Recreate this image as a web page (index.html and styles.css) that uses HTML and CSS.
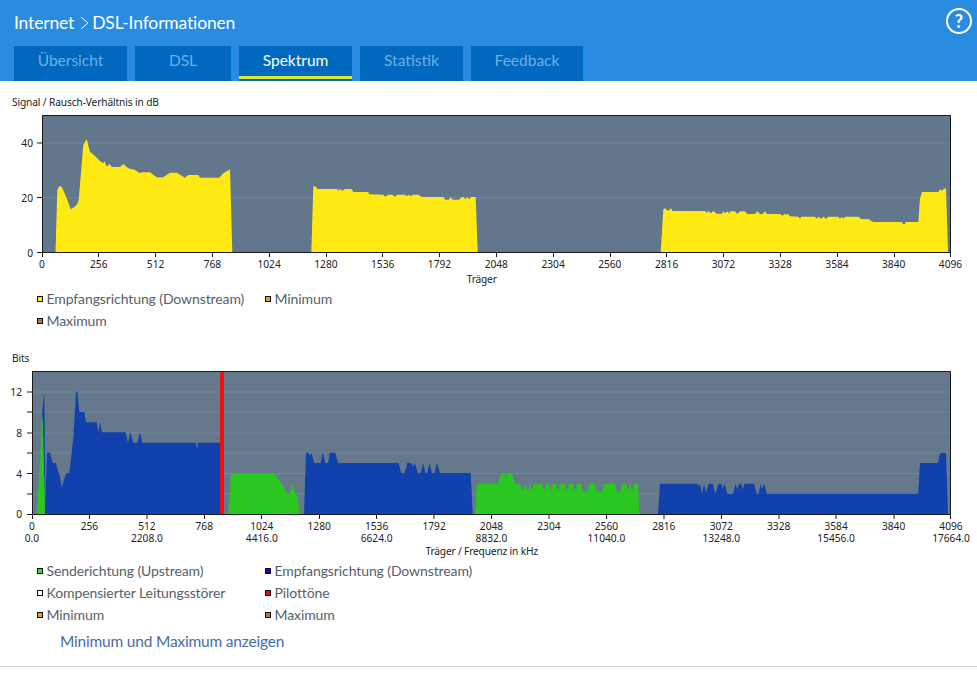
FILE: index.html
```html
<!DOCTYPE html>
<html lang="de">
<head>
<meta charset="utf-8">
<title>DSL-Informationen</title>
<link rel="stylesheet" href="styles.css">
</head>
<body>
<header class="top">
  <div class="title-row">
    <h1 class="crumb">
      <span>Internet</span>
      <svg class="chev" width="10" height="14" viewBox="0 0 10 14"><polyline points="3,1 10,7 3,13"/></svg>
      <span>DSL-Informationen</span>
    </h1>
    <span class="help">?</span>
  </div>
  <nav class="tabs">
    <a class="tab t1">Übersicht</a>
    <a class="tab t2">DSL</a>
    <a class="tab t3 active">Spektrum</a>
    <a class="tab t4">Statistik</a>
    <a class="tab t5">Feedback</a>
  </nav>
</header>
<main>
  <section class="chart first">
    <p class="chart-title">Signal / Rausch-Verhältnis in dB</p>
    <svg class="plot p1" width="977" height="178" viewBox="0 110 977 178">
      <rect class="bg" x="42" y="115" width="909" height="137.5"/>
      <path class="grid" d="M42 143H950M42 197.5H950"/>
      <polygon class="yellow" points="55.5,252.5 57.3,190 59.3,186 62,187.3 66.7,198.3 70.7,209.3 74,207.3 77.3,204 78.7,200 83.3,145 86.7,139 90,151.7 95,156 100,161 103.3,163.3 104.7,161.3 106.7,166.7 109.3,164 112,167 120,167 123.3,164 128.3,168.3 135,170 140,173.3 141.7,172.3 150,172.3 156.7,177.3 163.3,177.3 170,172.7 176.7,172.7 185,177.7 188.3,175 198.3,175 200,177.7 219.3,177.7 223.3,173.3 230,169.3 232.3,252.5"/>
      <polygon class="yellow" points="311.3,252.5 313.3,186 316.7,187.3 317.3,189 337.3,189 338.7,190.7 340,189 342.7,190.7 345,189 351.7,189 353.3,192 368.3,192 369,194.3 383.3,194.7 385.3,196.7 388,194.7 392.7,194.7 394.7,196.7 397.3,194.7 405.3,194.7 406.7,196.3 408.7,194.7 410.7,196.3 412.7,194.7 418.3,194.7 420,196 422,197 443.3,197 445.3,199.7 448.7,199.7 450.7,197.3 452.7,199.7 459.3,199.7 461.3,197.3 464,197.3 465.3,199.3 467.3,197.3 469.3,199.3 471.3,197 475.7,197 477.7,252.5"/>
      <polygon class="yellow" points="660.7,252.5 663.3,209.3 665,208.3 668.3,211 670.7,208.3 672.7,211 705,211 706.7,212.7 708.3,211 710.7,213.3 713.3,211 716.7,213.7 722,213.7 723.3,211.3 725.3,213.3 727.3,211.3 729.3,213.7 730,211.3 735,211.3 737.3,214 740,211.3 745,211.3 747.3,214 755,214 757.3,211.3 760,214 762.7,214 764.7,211.3 767.3,214 780,214 782.7,215.7 784,214.3 788.3,214.3 790,216.3 798.3,216.7 800,218.7 801.3,216.7 815,216.7 816.7,218.7 818.3,216.7 821,218.7 823.3,216.7 826,218.7 828.3,216.7 838.3,216.7 840,218.7 842,216.7 843.3,218.7 845.3,216.7 859,216.7 860.7,219 868.3,219.3 869.3,219 870.7,220.7 873.3,222 901.7,222 904,224.7 906,222 918.3,222 920,198.3 922,192 938.3,192 940,189.3 941.7,190.7 943.3,189.3 946,188.3 948,252.5"/>
      <path class="axis" d="M42 115.5H950.5V252.5M42.500 115V252.500H951"/>
      <path class="axis" d="M37 143H42M37 197.500H42M37 252.500H42M42.500 253V257M98.500 253V257M155.500 253V257M212.500 253V257M269.500 253V257M326.500 253V257M382.500 253V257M439.500 253V257M496.500 253V257M553.500 253V257M610.500 253V257M666.500 253V257M723.500 253V257M780.500 253V257M837.500 253V257M894.500 253V257M950.500 253V257"/>
      <g class="ylab">
        <text x="33" y="147">40</text>
        <text x="33" y="201.500">20</text>
        <text x="33" y="256.500">0</text>
      </g>
      <g class="xlab">
        <text x="42" y="268">0</text>
        <text x="98.800" y="268">256</text>
        <text x="155.600" y="268">512</text>
        <text x="212.400" y="268">768</text>
        <text x="269.100" y="268">1024</text>
        <text x="325.900" y="268">1280</text>
        <text x="382.700" y="268">1536</text>
        <text x="439.500" y="268">1792</text>
        <text x="496.300" y="268">2048</text>
        <text x="553.100" y="268">2304</text>
        <text x="609.800" y="268">2560</text>
        <text x="666.600" y="268">2816</text>
        <text x="723.400" y="268">3072</text>
        <text x="780.200" y="268">3328</text>
        <text x="837" y="268">3584</text>
        <text x="893.700" y="268">3840</text>
        <text x="950.500" y="268">4096</text>
        <text class="axis-name" x="481.700" y="283">Träger</text>
      </g>
    </svg>
    <ul class="legend">
      <li><i class="sw yel"></i>Empfangsrichtung (Downstream)</li>
      <li><i class="sw min"></i>Minimum</li>
      <li><i class="sw max"></i>Maximum</li>
    </ul>
  </section>
  <section class="chart second">
    <p class="chart-title">Bits</p>
    <svg class="plot p2" width="977" height="195" viewBox="0 365 977 195">
      <rect class="bg2" x="32" y="371.500" width="919" height="142.500"/>
      <path class="grid" d="M32 392H950M32 412H950M32 433H950M32 453H950M32 473.500H950M32 494H950"/>
      <polygon class="blue" points="42,414 44.300,391.700 45.500,514"/>
      <polygon class="blue" points="45,514 47,452.700 50,452.700 52.700,463 56,463 58.300,473.300 59.300,473.300 61.700,487.700 66,473.300 69.300,473.300 73.300,438.300 76,391.700 77.300,391.700 79.300,412 84.300,412 86,422.300 96.700,422.300 98.300,432 100,422.300 102,432.300 125.700,432.300 128,442.700 130.300,432.300 133.300,442.700 137.300,442.700 140,432.300 142.300,442.700 195.700,442.700 197,448.300 198.300,442.700 220,442.700 221,514"/>
      <polygon class="green" points="36.700,514 42.700,413.300 45,514"/>
      <polygon class="green" points="228.300,514 231,473.300 274,473.300 280,481.700 284,486.700 286,493.300 290,493.300 292.700,483.300 295,493.300 297.300,495 300,514"/>
      <polygon class="blue" points="304,514 306,452.700 308.700,452.700 310,456 311.700,452.700 314,463 320.700,463 322.700,452.300 325.300,463 328,463 330,452.700 335.300,452.700 338,463 398.700,463 401.300,473 404.700,473 407.300,463 411.300,463 413,467 414.700,463 418,473 420.700,473 423.300,463 425.300,473 427.300,473 429.300,463 432,473 434.700,473 436.700,463 440,473 470.700,473 472.700,514"/>
      <polygon class="green" points="475.300,514 476.700,483.700 497.300,483.700 501.700,473 504.700,473 506,478.300 507.300,473 511.700,473 515,483.700 520,483.700 523,491 525.500,483.700 528,491 530,483.700 532,491 534,483.700 542,483.700 544,491 546,483.700 549,483.700 550.500,491 552,483.700 556,483.700 558,491 560,483.700 565,483.700 567,491 569,483.700 573,483.700 575,491 577,483.700 581,483.700 583,492 587,492 589,483.700 595,483.700 597,492 602,492 604,483.700 615,483.700 617,492 620,492 622,483.700 626,483.700 628,491 630,483.700 632,491 634,483.700 638,483.700 639.300,514"/>
      <polygon class="blue" points="658,514 660,483.700 697.300,483.700 698.700,486 700,483.700 702,493.700 704,483.700 706,493 708.700,483.700 712.700,483.700 715.300,493.700 718.700,483.700 721.300,483.700 722.700,489 724.700,483.700 727.300,493.700 733.300,493.700 735.300,483.700 737.300,489 739.300,483.700 741.300,483.700 742.700,489 744.700,483.700 754,483.700 756.700,493.700 758.700,493.700 760.700,483.700 762,489 764,483.700 766.700,493.700 918.300,493.700 920,463 938,463 940,453.300 944.700,452.700 946,453.300 948,514"/>
      <rect class="pilot" x="220" y="371.500" width="4" height="142.500"/>
      <path class="axis" d="M32 371.500H950.500V514M32.500 371V514.500H951"/>
      <path class="axis" d="M27 392H32M27 412H32M27 433H32M27 453H32M27 473.500H32M27 494H32M27 514.500H32M32.500 515V519M89.500 515V519M147 515V519M204.500 515V519M261.500 515V519M319.500 515V519M376.500 515V519M434 515V519M491.500 515V519M549 515V519M606.500 515V519M664 515V519M721.500 515V519M779 515V519M836 515V519M894 515V519M950.500 515V519"/>
      <g class="ylab">
        <text x="22" y="396">12</text>
        <text x="22" y="437">8</text>
        <text x="22" y="477.500">4</text>
        <text x="22" y="518">0</text>
      </g>
      <g class="xlab">
        <text x="32" y="530">0</text>
        <text x="89.400" y="530">256</text>
        <text x="146.900" y="530">512</text>
        <text x="204.300" y="530">768</text>
        <text x="261.800" y="530">1024</text>
        <text x="319.200" y="530">1280</text>
        <text x="376.600" y="530">1536</text>
        <text x="434.100" y="530">1792</text>
        <text x="491.500" y="530">2048</text>
        <text x="548.900" y="530">2304</text>
        <text x="606.400" y="530">2560</text>
        <text x="663.800" y="530">2816</text>
        <text x="721.300" y="530">3072</text>
        <text x="778.700" y="530">3328</text>
        <text x="836.100" y="530">3584</text>
        <text x="893.600" y="530">3840</text>
        <text x="951" y="530">4096</text>
        <text x="32" y="542">0.0</text>
        <text x="146.900" y="542">2208.0</text>
        <text x="261.800" y="542">4416.0</text>
        <text x="376.600" y="542">6624.0</text>
        <text x="491.500" y="542">8832.0</text>
        <text x="606.400" y="542">11040.0</text>
        <text x="721.300" y="542">13248.0</text>
        <text x="836.100" y="542">15456.0</text>
        <text x="951" y="542">17664.0</text>
        <text class="axis-name" x="481.700" y="555">Träger / Frequenz in kHz</text>
      </g>
    </svg>
    <ul class="legend">
      <li><i class="sw up"></i>Senderichtung (Upstream)</li>
      <li><i class="sw down"></i>Empfangsrichtung (Downstream)</li>
      <li><i class="sw comp"></i>Kompensierter Leitungsstörer</li>
      <li><i class="sw pil"></i>Pilottöne</li>
      <li><i class="sw min"></i>Minimum</li>
      <li><i class="sw max"></i>Maximum</li>
    </ul>
    <a class="toggle">Minimum und Maximum anzeigen</a>
  </section>
  <hr class="rule">
</main>
</body>
</html>
```
FILE: styles.css
```css
html, body { margin: 0; padding: 0; background: #fff; }
body { font-family: "Noto Sans", "Open Sans", sans-serif; width: 977px; overflow: hidden; }

.top { background: #2a8ce0; height: 81px; display: flex; flex-direction: column; box-sizing: border-box; font-family: Lato, "Noto Sans", sans-serif; }
.title-row { height: 46px; display: flex; justify-content: space-between; align-items: flex-start; padding: 8px 5px 0 14px; box-sizing: border-box; }
.crumb { margin: 5px 0 0; display: flex; align-items: center; gap: 4px; font-size: 17.500px; font-weight: 400; line-height: 20px; color: #fff; letter-spacing: -0.16px; }
.chev { fill: none; stroke: #fff; stroke-width: 1; overflow: visible; }
.help { width: 26px; height: 26px; box-sizing: border-box; border: 2px solid #fff; border-radius: 50%; color: #fff; font-size: 18px; font-weight: 700; line-height: 22px; text-align: center; }

.tabs { display: flex; gap: 8px; padding-left: 14px; }
.tab { height: 35px; box-sizing: border-box; background: #0069bf; color: #71aee3; font-size: 15.500px; line-height: 29px; text-align: center; }
.t1 { width: 113px; }
.t2 { width: 96px; }
.t3 { width: 113px; }
.t4 { width: 103px; }
.t5 { width: 112px; }
.tab.active { color: #fff; position: relative; }
.tab.active::after { content: ""; position: absolute; left: 0; right: 0; bottom: 2px; height: 3px; background: #d9e92f; }

.chart-title { margin: 0 0 0 12px; font-size: 10.200px; line-height: 14px; color: #222; letter-spacing: -0.13px; }
.chart.first { padding-top: 14px; }
.chart.first .chart-title { margin-bottom: 1px; }
.chart.second { padding-top: 19px; }
.plot { display: block; }
.bg { fill: #62778c; }
.bg2 { fill: #66788c; }
.grid { fill: none; stroke: #73869a; stroke-width: 1; }
.yellow { fill: #ffe913; }
.blue { fill: #1141ad; }
.green { fill: #29c71f; }
.pilot { fill: #ee1111; }
.axis { fill: none; stroke: #1a1a1a; stroke-width: 1; }
.ylab text { font-size: 10.200px; fill: #222; text-anchor: end; }
.xlab text { font-size: 10.200px; fill: #222; text-anchor: middle; }
.xlab .axis-name { letter-spacing: -0.17px; }

.legend { list-style: none; margin: 0; padding: 0 0 0 37px; display: grid; grid-template-columns: 228px 228px; grid-auto-rows: 22px; font-family: Lato, "Noto Sans", sans-serif; font-size: 14px; line-height: 22px; color: #555f6b; letter-spacing: -0.1px; }
.legend li { display: flex; align-items: center; gap: 3.500px; white-space: nowrap; }
.sw { width: 6px; height: 6px; box-sizing: border-box; border: 1px solid #111; flex: none; }
.yel { background: #ffe913; }
.min { background: #f0992b; }
.max { background: #b8763c; }
.up { background: #2fe02f; }
.down { background: #0a0ac8; }
.comp { background: #fff; }
.pil { background: #e01010; }

.toggle { display: block; margin: 4px 0 0 60px; font-family: Lato, "Noto Sans", sans-serif; font-size: 15.500px; line-height: 22px; color: #4a6ca5; letter-spacing: -0.2px; }
.rule { margin: 14px 0 0; border: 0; border-top: 1px solid #d2d2d2; }
```
